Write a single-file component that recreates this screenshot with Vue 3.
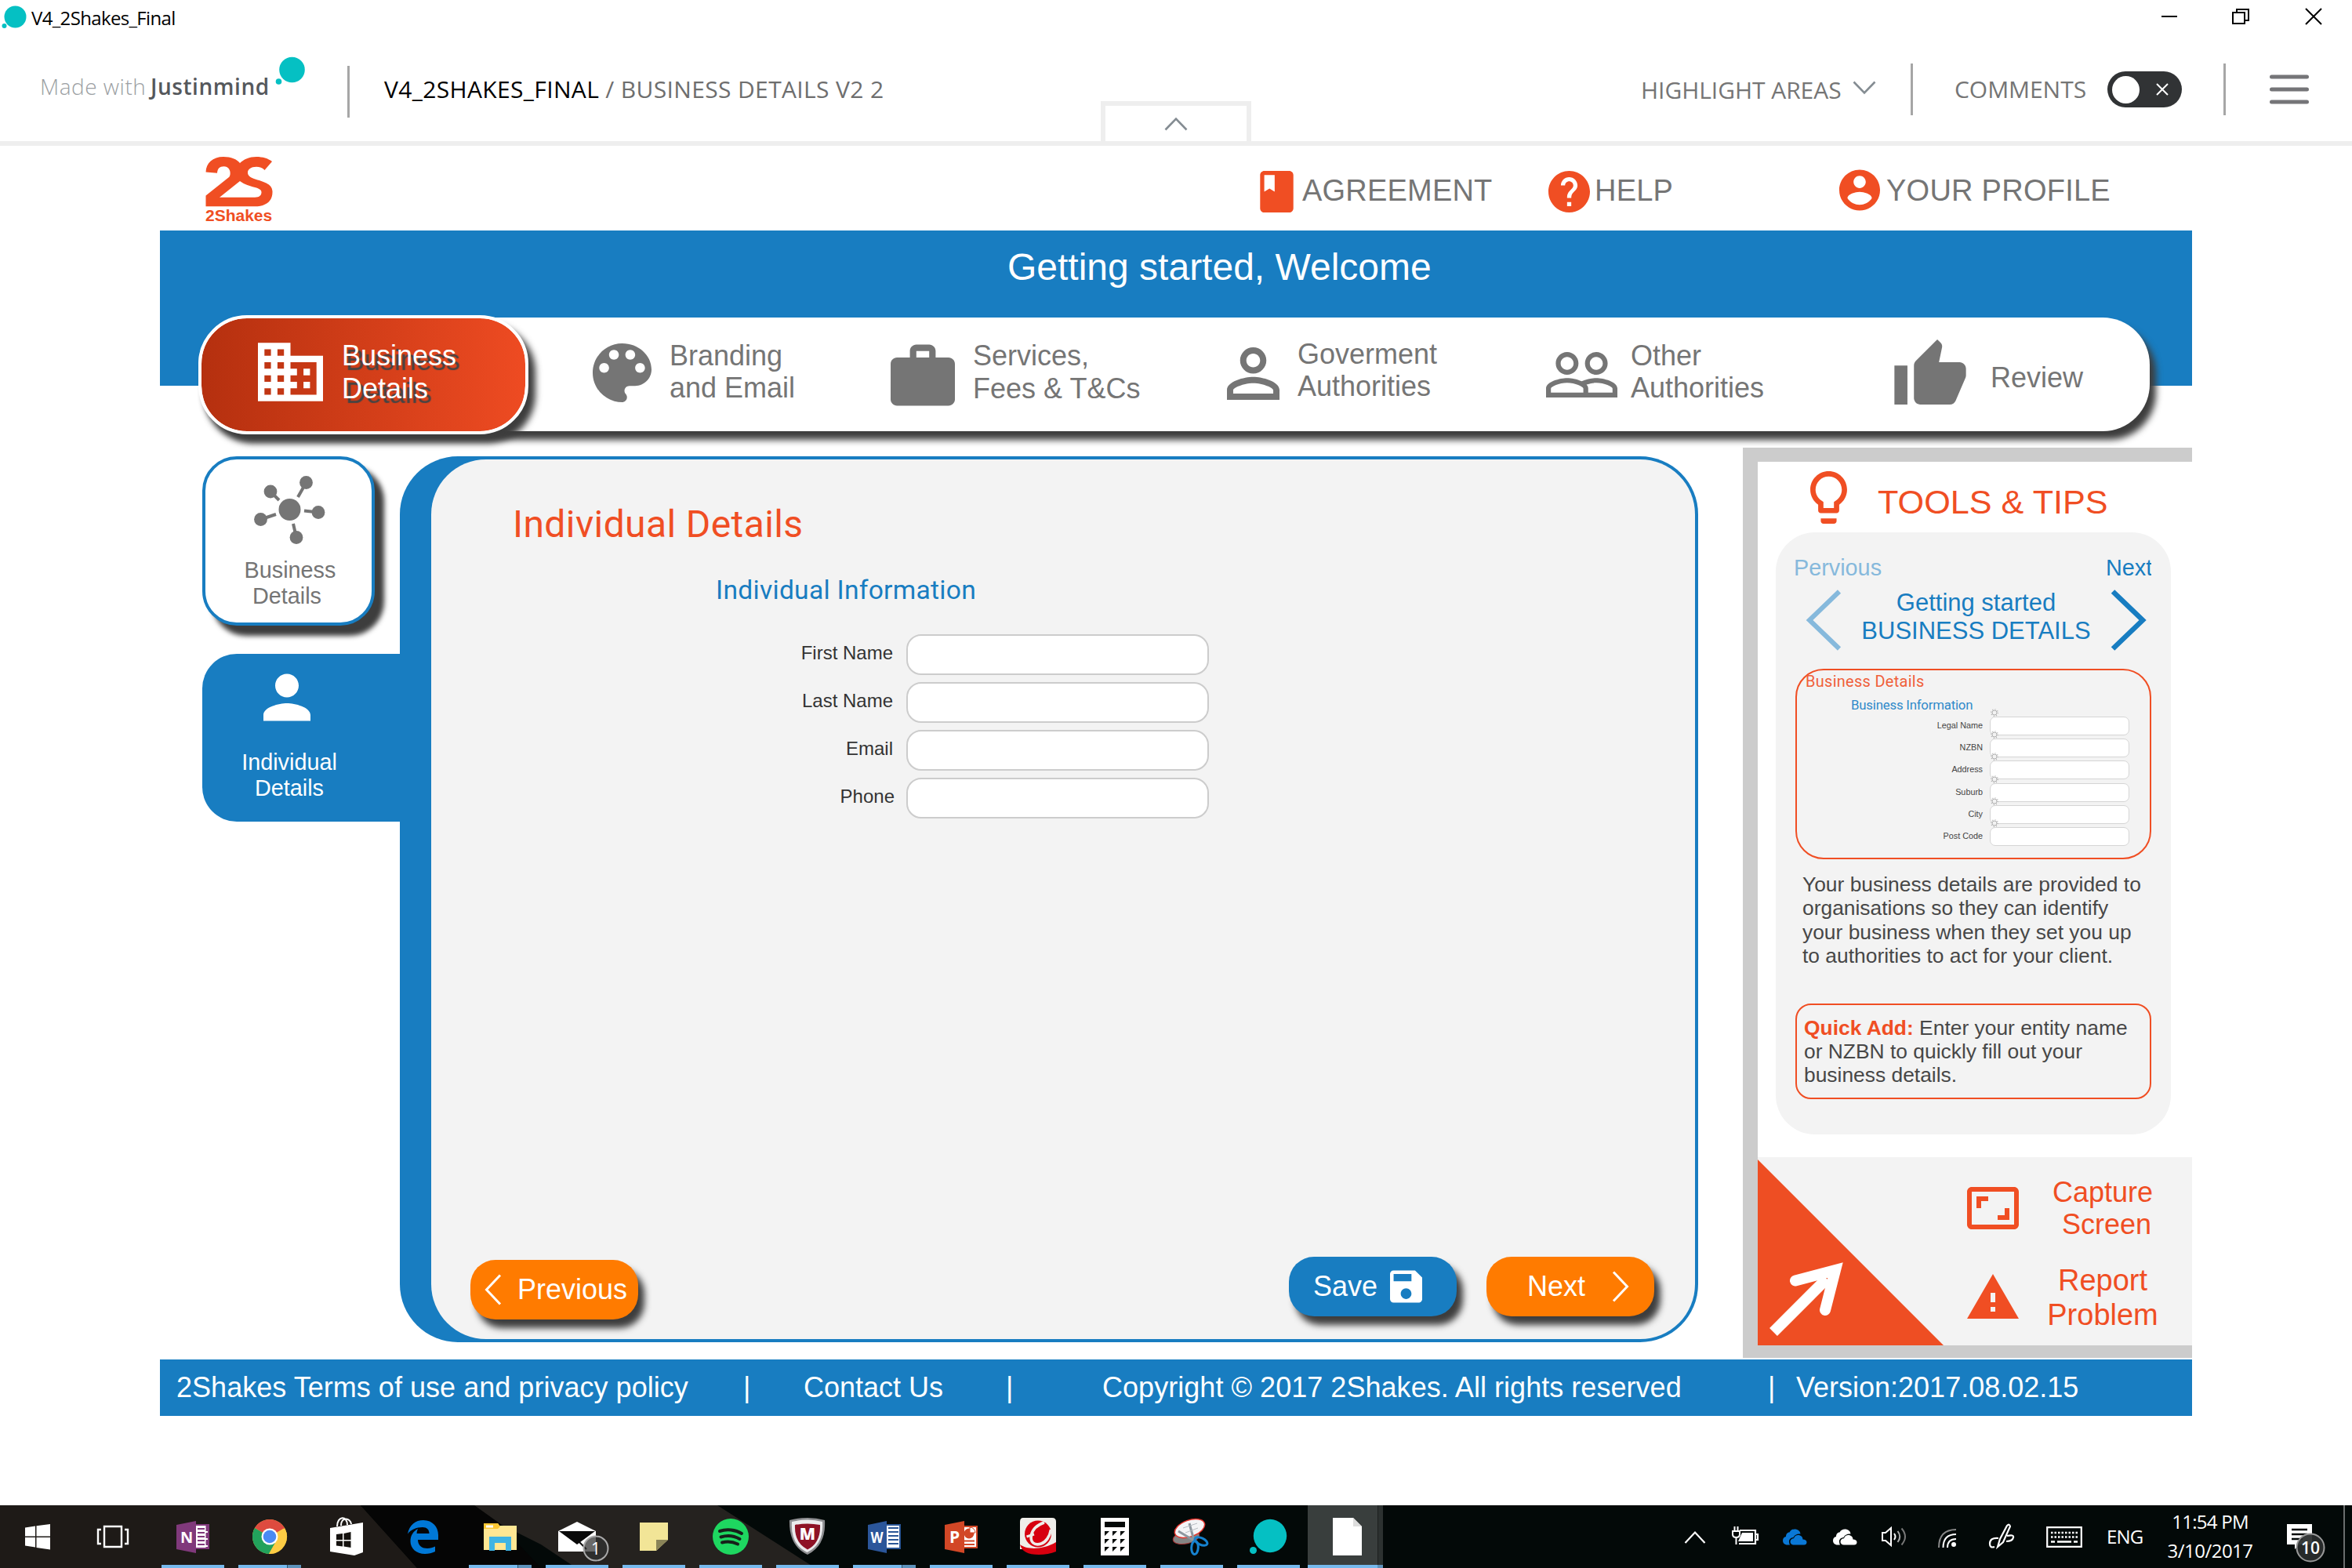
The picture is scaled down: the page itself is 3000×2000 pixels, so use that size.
<script setup>
const paths = {
  domain: 'M12 7V3H2v18h20V7H12zM6 19H4v-2h2v2zm0-4H4v-2h2v2zm0-4H4V9h2v2zm0-4H4V5h2v2zm4 12H8v-2h2v2zm0-4H8v-2h2v2zm0-4H8V9h2v2zm0-4H8V5h2v2zm10 12h-8v-2h2v-2h-2v-2h2v-2h-2V9h8v10zm-2-8h-2v2h2v-2zm0 4h-2v2h2v-2z',
  palette: 'M12 3c-4.97 0-9 4.03-9 9s4.03 9 9 9c.83 0 1.5-.67 1.5-1.5 0-.39-.15-.74-.39-1.01-.23-.26-.38-.61-.38-.99 0-.83.67-1.5 1.5-1.5H16c2.76 0 5-2.24 5-5 0-4.42-4.03-8-9-8zm-5.5 9c-.83 0-1.5-.67-1.5-1.5S5.67 9 6.5 9 8 9.67 8 10.5 7.33 12 6.5 12zm3-4C8.67 8 8 7.33 8 6.5S8.67 5 9.5 5s1.5.67 1.5 1.5S10.33 8 9.5 8zm5 0c-.83 0-1.5-.67-1.5-1.5S13.67 5 14.5 5s1.5.67 1.5 1.5S15.33 8 14.5 8zm3 4c-.83 0-1.5-.67-1.5-1.5S16.67 9 17.5 9s1.5.67 1.5 1.5-.67 1.5-1.5 1.5z',
  work: 'M20 6h-4V4c0-1.11-.89-2-2-2h-4c-1.11 0-2 .89-2 2v2H4c-1.11 0-1.99.89-1.99 2L2 19c0 1.11.89 2 2 2h16c1.11 0 2-.89 2-2V8c0-1.11-.89-2-2-2zm-6 0h-4V4h4v2z',
  personOutline: 'M12 5.9c1.16 0 2.1.94 2.1 2.1s-.94 2.1-2.1 2.1S9.9 9.16 9.9 8s.94-2.1 2.1-2.1m0 9c2.97 0 6.1 1.46 6.1 2.1v1.1H5.9V17c0-.64 3.13-2.1 6.1-2.1M12 4C9.79 4 8 5.79 8 8s1.79 4 4 4 4-1.79 4-4-1.79-4-4-4zm0 9c-2.67 0-8 1.34-8 4v3h16v-3c0-2.66-5.33-4-8-4z',
  peopleOutline: 'M16.5 13c-1.2 0-3.07.34-4.5 1-1.43-.67-3.3-1-4.5-1C5.33 13 1 14.08 1 16.25V19h22v-2.75c0-2.17-4.33-3.25-6.5-3.25zm-4 4.5h-10v-1.25c0-.54 2.56-1.75 5-1.75s5 1.21 5 1.75v1.25zm9 0H14v-1.25c0-.46-.2-.86-.52-1.22.88-.3 1.96-.53 3.02-.53 2.44 0 5 1.21 5 1.75v1.25zM7.5 12c1.93 0 3.5-1.57 3.5-3.5S9.43 5 7.5 5 4 6.57 4 8.5 5.57 12 7.5 12zm0-5.5c1.1 0 2 .9 2 2s-.9 2-2 2-2-.9-2-2 .9-2 2-2zm9 5.5c1.93 0 3.5-1.57 3.5-3.5S18.43 5 16.5 5 13 6.57 13 8.5s1.57 3.5 3.5 3.5zm0-5.5c1.1 0 2 .9 2 2s-.9 2-2 2-2-.9-2-2 .9-2 2-2z',
  thumb: 'M1 21h4V9H1v12zm22-11c0-1.1-.9-2-2-2h-6.31l.95-4.57.03-.32c0-.41-.17-.79-.44-1.06L14.17 1 7.59 7.59C7.22 7.95 7 8.45 7 9v10c0 1.1.9 2 2 2h9c.83 0 1.54-.5 1.84-1.22l3.02-7.05c.09-.23.14-.47.14-.73v-1.91l-.01-.01L23 10z',
  book: 'M18 2H6c-1.1 0-2 .9-2 2v16c0 1.1.9 2 2 2h12c1.1 0 2-.9 2-2V4c0-1.1-.9-2-2-2zM6 4h5v8l-2.5-1.5L6 12V4z',
  help: 'M12 2C6.48 2 2 6.48 2 12s4.48 10 10 10 10-4.48 10-10S17.52 2 12 2zm1 17h-2v-2h2v2zm2.07-7.75l-.9.92C13.45 12.9 13 13.5 13 15h-2v-.5c0-1.1.45-2.1 1.17-2.83l1.24-1.26c.37-.36.59-.86.59-1.41 0-1.1-.9-2-2-2s-2 .9-2 2H8c0-2.21 1.79-4 4-4s4 1.79 4 4c0 .88-.36 1.68-.93 2.25z',
  account: 'M12 2C6.48 2 2 6.48 2 12s4.48 10 10 10 10-4.48 10-10S17.52 2 12 2zm0 3c1.66 0 3 1.34 3 3s-1.34 3-3 3-3-1.34-3-3 1.34-3 3-3zm0 14.2c-2.5 0-4.71-1.28-6-3.22.03-1.99 4-3.08 6-3.08 1.99 0 5.97 1.09 6 3.08-1.29 1.94-3.5 3.22-6 3.22z',
  person: 'M12 12c2.21 0 4-1.79 4-4s-1.79-4-4-4-4 1.79-4 4 1.79 4 4 4zm0 2c-2.67 0-8 1.34-8 4v2h16v-2c0-2.66-5.33-4-8-4z',
  bulb: 'M9 21c0 .55.45 1 1 1h4c.55 0 1-.45 1-1v-1H9v1zm3-19C8.14 2 5 5.14 5 9c0 2.38 1.19 4.47 3 5.74V17c0 .55.45 1 1 1h6c.55 0 1-.45 1-1v-2.26c1.81-1.27 3-3.36 3-5.74 0-3.86-3.14-7-7-7zm2.85 11.1l-.85.6V16h-4v-2.3l-.85-.6C7.8 12.16 7 10.63 7 9c0-2.76 2.24-5 5-5s5 2.24 5 5c0 1.63-.8 3.16-2.15 4.1z',
  save: 'M17 3H5c-1.11 0-2 .9-2 2v14c0 1.1.89 2 2 2h14c1.1 0 2-.9 2-2V7l-4-4zm-5 16c-1.66 0-3-1.34-3-3s1.34-3 3-3 3 1.34 3 3-1.34 3-3 3zm3-10H5V5h10v4z',
  aspect: 'M19 12h-2v3h-3v2h5v-5zM7 9h3V7H5v5h2V9zm14-6H3c-1.1 0-2 .9-2 2v14c0 1.1.9 2 2 2h18c1.1 0 2-.9 2-2V5c0-1.1-.9-2-2-2zm0 16.01H3V4.99h18v14.02z',
  warning: 'M1 21h22L12 2 1 21zm12-3h-2v-2h2v2zm0-4h-2v-4h2v4z',
  cloud: 'M7 20.5C3 20.500 1 18 1 15c0-2.800 1.800-4.600 4-5C5 6 7.500 4.500 9.500 4.500 11 1.500 13.500.5 16 .5c4.500 0 7 2.500 7.500 6-4-.5-7.500 1-9 4.500-4 .5-6 3-5.500 6 .2 1.500.5 2.500 1 3.500zM15 20.500c-3 0-4.500-1.800-4.500-4 0-2.500 2-4.200 4.500-4.200 1-3 3-4.300 5.500-4.300 3.500 0 5.800 2.300 6 5.500 2.800 0 5 1.200 5 3.700 0 2-1.500 3.300-3.500 3.300z',
}
const nav = [
  { key: 'business', icon: 'domain', box: '2 3 20 18', lines: ['Business', 'Details'] },
  { key: 'branding', icon: 'palette', box: '3 3 18 18', lines: ['Branding', 'and Email'] },
  { key: 'services', icon: 'work', box: '2 2 20 19', lines: ['Services,', 'Fees & T&Cs'] },
  { key: 'goverment', icon: 'personOutline', box: '4 4 16 16', lines: ['Goverment', 'Authorities'] },
  { key: 'other', icon: 'peopleOutline', box: '1 5 22 14', lines: ['Other', 'Authorities'] },
  { key: 'review', icon: 'thumb', box: '1 1 22 20', lines: ['Review'] },
]
const fields = ['First Name', 'Last Name', 'Email', 'Phone']
const miniFields = ['Legal Name', 'NZBN', 'Address', 'Suburb', 'City', 'Post Code']
</script>

<template>
  <div class="screen">
    <header class="titlebar">
      <svg class="app-icon" width="36" height="40" viewBox="0 0 36 40"><circle cx="19.500" cy="21.500" r="14" fill="#05c0c3" /><circle cx="5.500" cy="33" r="3" fill="#05c0c3" /></svg>
      <span class="window-title">V4_2Shakes_Final</span>
      <div class="window-buttons">
        <svg width="92" height="44" viewBox="0 0 92 44"><path d="M36 21h20" stroke="#000" stroke-width="2" /></svg>
        <svg width="92" height="44" viewBox="0 0 92 44"><path d="M35 16h15v14H35zM40 16v-4h15v14h-5" fill="none" stroke="#000" stroke-width="2" /></svg>
        <svg width="92" height="44" viewBox="0 0 92 44"><path d="M36 11l20 20M56 11L36 31" stroke="#000" stroke-width="2" /></svg>
      </div>
    </header>

    <div class="toolbar">
      <div class="tb-left">
        <span class="made">Made with</span><span class="jim">Justinmind</span>
        <svg class="jim-dot" width="40" height="40" viewBox="0 0 40 40"><circle cx="21.500" cy="17" r="16.300" fill="#05c0c3" /><circle cx="4.500" cy="32" r="3.800" fill="#05c0c3" /></svg>
        <i class="divider"></i>
        <span class="crumb"><b>V4_2SHAKES_FINAL</b> / BUSINESS DETAILS V2 2</span>
      </div>
      <div class="tab"><svg width="30" height="18" viewBox="0 0 30 18"><path d="M1.500 16.500L15 2.500l13.500 14" fill="none" stroke="#848c92" stroke-width="2.600" /></svg></div>
      <div class="tb-right">
        <span class="highlight">HIGHLIGHT AREAS</span>
        <svg class="chev" width="30" height="18" viewBox="0 0 30 18"><path d="M1.500 1.500L15 15.500l13.500-14" fill="none" stroke="#848c92" stroke-width="2.600" /></svg>
        <i class="divider d2"></i>
        <span class="comments">COMMENTS</span>
        <span class="toggle"><i></i><svg width="16" height="16" viewBox="0 0 16 16"><path d="M1 1l14 14M15 1L1 15" stroke="#fff" stroke-width="2" /></svg></span>
        <i class="divider d3"></i>
        <svg class="burger" width="50" height="40" viewBox="0 0 50 40"><path d="M2.500 4h45M2.500 20h45M2.500 36h45" stroke="#757578" stroke-width="5" stroke-linecap="round" /></svg>
      </div>
    </div>

    <div class="stage">
      <div class="site-head">
        <div class="logo">
          <svg width="86" height="64" viewBox="0 0 86 64"><path fill="#f04e23" fill-rule="evenodd" d="M.5 19.500C1 8 9 0 23 0c10 0 17 3 21 8 5-5 12-8 21-8 8 0 15 2 20 6L75.500 17C73 14 69 12.700 65 12.700 58 12.700 54 16 54 20c0 4 3 6 8 8 12 4 23 6 23.500 16 .5 12-7.500 19.300-22.500 19.300H.5V49.500L30 26c3-3 2.500-13.700-6.500-13.700C18 12.300 15.500 15 15 20.700zM44 31L18 51.700h45c6 0 8.500-2.700 8.500-6.700C71.500 38 56 40 44 31z" /></svg>
          <span>2Shakes</span>
        </div>
        <svg class="ic-book" viewBox="4 2 16 20"><path :d="paths.book" /></svg><span class="t-agree">AGREEMENT</span>
        <svg class="ic-help" viewBox="2 2 20 20"><path :d="paths.help" /></svg><span class="t-help">HELP</span>
        <svg class="ic-acct" viewBox="2 2 20 20"><path :d="paths.account" /></svg><span class="t-acct">YOUR PROFILE</span>
      </div>

      <div class="banner">Getting started, Welcome</div>

      <nav class="steps">
        <a v-for="n in nav" :key="n.key" class="step" :class="n.key">
          <svg :viewBox="n.box"><path :d="paths[n.icon]" /></svg>
          <span><template v-for="(l, i) in n.lines" :key="l"><br v-if="i" />{{ l }}</template></span>
        </a>
      </nav>

      <main class="main">
        <div class="side">
          <div class="side-card">
            <svg width="92" height="88" viewBox="0 0 92 88">
              <g fill="#757575"><circle cx="45.500" cy="44" r="14" /><circle cx="21" cy="21" r="8.400" /><circle cx="66.500" cy="9.500" r="8.400" /><circle cx="8.500" cy="56.500" r="8.400" /><circle cx="82" cy="47.500" r="8.400" /><circle cx="54" cy="79.500" r="8.400" /></g>
              <path d="M21 21l11 11M66.500 9.500L56 28M8.500 56.500L28 50M82 47.500L64 45.500M54 79.500L50 62" stroke="#757575" stroke-width="4" />
            </svg>
            <span>Business<br />Details&nbsp;</span>
          </div>
          <div class="side-tab">
            <svg width="60" height="61" viewBox="4 4 16 16"><path :d="paths.person" fill="#fff" /></svg>
            <span>Individual<br />Details</span>
          </div>
        </div>

        <section class="panel">
          <div class="panel-in">
            <h1>Individual Details</h1>
            <h2>Individual Information</h2>
            <div class="form">
              <label v-for="f in fields" :key="f" class="row"><span>{{ f }}</span><i></i></label>
            </div>
            <div class="actions">
              <button class="prev"><svg width="22" height="40" viewBox="0 0 22 40"><path d="M20 1.500L2.500 20 20 38.500" /></svg>Previous</button>
              <button class="save">Save<svg width="41" height="42" viewBox="3 3 18 18"><path :d="paths.save" /></svg></button>
              <button class="next">Next<svg width="22" height="40" viewBox="0 0 22 40"><path d="M2 1.500L19.500 20 2 38.500" /></svg></button>
            </div>
          </div>
        </section>

        <aside class="tools">
          <div class="tools-head"><svg width="47" height="67" viewBox="5 2 14 20"><path :d="paths.bulb" fill="#f04e23" /></svg><span>TOOLS &amp; TIPS</span></div>
          <div class="tip">
            <div class="tip-nav"><span class="pv">Pervious</span><span class="nx">Next</span></div>
            <div class="tip-title">
              <svg width="46" height="78" viewBox="0 0 46 78"><path d="M43 2.500L5 39l38 36.500" stroke="#86b9dc" stroke-width="6" fill="none" /></svg>
              <span>Getting started<br />BUSINESS DETAILS</span>
              <svg width="46" height="78" viewBox="0 0 46 78"><path d="M3 2.500L41 39 3 75.500" stroke="#187dc1" stroke-width="6.500" fill="none" /></svg>
            </div>
            <div class="mini">
              <div class="mini-h">Business Details</div>
              <div class="mini-s">Business Information</div>
              <div class="mini-form">
                <div v-for="f in miniFields" :key="f" class="mini-row"><span>{{ f }}</span><i><svg width="10" height="10" viewBox="0 0 10 10"><circle cx="5" cy="5" r="3" fill="#f3f3f3" stroke="#b0b0b0" stroke-width="1" /><circle cx="5" cy="5" r="4.300" fill="none" stroke="#b0b0b0" stroke-width="1.200" stroke-dasharray="1.200 2.177" /></svg></i></div>
              </div>
            </div>
            <p>Your business details are provided to<br />organisations so they can identify<br />your business when they set you up<br />to authorities to act for your client.</p>
            <div class="quick"><b>Quick Add:</b> Enter your entity name<br />or NZBN to quickly fill out your<br />business details.</div>
          </div>
          <div class="tool-foot">
            <svg class="corner" width="238" height="240" viewBox="0 0 238 240"><path d="M0 3v237h237z" fill="#ee4e23" /><path d="M20 223L88 155" stroke="#fff" stroke-width="14" /><path d="M48 157.500L99 144l-13 51" stroke="#fff" stroke-width="14" fill="none" stroke-linecap="round" /></svg>
            <div class="tool-list">
              <div class="tool"><svg width="66" height="54" viewBox="1 3 22 18"><path :d="paths.aspect" /></svg><span>Capture<br />&nbsp;Screen</span></div>
              <div class="tool report"><svg width="66" height="57" viewBox="1 2 22 19"><path :d="paths.warning" /></svg><span>Report<br />Problem</span></div>
            </div>
          </div>
        </aside>
      </main>

      <footer class="foot">
        <span class="f1">2Shakes Terms of use and privacy policy</span><span class="b1">|</span><span class="f2">Contact Us</span><span class="b2">|</span><span class="f3">Copyright © 2017 2Shakes. All rights reserved</span><span class="b3">|</span><span class="f4">Version:2017.08.02.15</span>
      </footer>
    </div>

    <div class="taskbar">
      <svg class="wall" width="3000" height="80" viewBox="0 0 3000 80"><rect width="3000" height="80" fill="#030908" /><path d="M0 0h460l72 80H0z" fill="#1e1a17" /><path d="M460 0h155l75 80H532z" fill="#050505" /><path d="M605 0h310l125 80H735L690 50 640 25z" fill="#25221f" /></svg>
      <div class="slot start"><svg viewBox="0 0 48 48"><path fill="#fff" d="M8 12.500l13-2v13H8zM22.500 10.200L40 8v15.500H22.500zM8 25h13v12.500l-13-2zM22.500 25H40v15.500l-17.500-2.400z" /></svg></div>
      <div class="slot view"><svg viewBox="0 0 48 48"><path fill="none" stroke="#fff" stroke-width="2.400" d="M13 11h22v26H13zM9 15H5v18h4M39 15h4v18h-4" /></svg></div>
      <div class="slot run"><svg viewBox="0 0 48 48"><path d="M26 9h18v30H26z" fill="#fff" stroke="#80397b" stroke-width="2" /><path d="M30 14h9M30 19h9M30 24h9M30 29h9M30 34h9" stroke="#80397b" stroke-width="2" /><path d="M42 10v28" stroke="#80397b" stroke-width="3" stroke-dasharray="7 2" /><path d="M3 9l25-5v41L3 40z" fill="#80397b" /><text x="8" y="32" font-size="20" font-weight="700" fill="#fff">N</text></svg></div>
      <div class="slot run multi"><svg viewBox="0 0 48 48"><circle cx="24" cy="24" r="22" fill="#fcc934" /><path d="M24 24L4.900 13A22 22 0 0 1 43 13z" fill="#de4b3f" /><path d="M24 24L4.900 13A22 22 0 0 0 23 46l10-17z" fill="#22a25c" /><path d="M24 24L43 13A22 22 0 0 1 23 46l10-18z" fill="#fdcc44" /><path d="M24 13.500h19.300L40 10 24 9z" fill="#de4b3f" /><circle cx="24" cy="24" r="10.500" fill="#fff" /><circle cx="24" cy="24" r="8.300" fill="#4a8af4" /></svg></div>
      <div class="slot"><svg viewBox="0 0 48 48"><path d="M3 13l42-7v38l-11 4L3 43z" fill="#fff" /><path d="M12 11c0-14 13-14 13-2M17 10c0-12 12-10 13-2" fill="none" stroke="#fff" stroke-width="2" /><path d="M11 21l8-1v8h-8zM20.500 20l9-2v10h-9zM11 29.500h8v7l-8-1zM20.500 29.500h9v8.500l-9-1.500z" fill="#15120f" /></svg></div>
      <div class="slot"><svg viewBox="0 0 48 48"><path fill="#0078d7" d="M4 20.500C6 9 14 3 24 3c12 0 19 9 19 19v6H17c0 8 6 11 12 11 4 0 7-1 10-2.500V43c-4 2-8 3-13 3C15 46 7.500 39 7.500 30c0-8 4-13 9.500-16-1 2-1.500 4-1.500 6h16c0-5-3-8-8.500-8-8 0-15 3-19 8.500z" /></svg></div>
      <div class="slot run multi"><svg viewBox="0 0 48 48"><path d="M3 7h18l2 3h22v31H3z" fill="#ffe793" /><path d="M3 7h18l3 4-3 3H3z" fill="#fdc733" /><path d="M6 9.500h9v3H6z" fill="#fff" /><path d="M10 24h28v18h-7v-10H17v10h-7z" fill="#3fb4e4" /></svg></div>
      <div class="slot run"><svg viewBox="0 0 72 48"><path d="M12 17L36 5l24 12v26H12z" fill="#fff" /><path d="M13 17h46L36 34z" fill="#0a0a0a" /><path d="M36 28l12 12" stroke="#0a0a0a" stroke-width="2" /><circle cx="60" cy="39" r="15.500" fill="#333b" stroke="#aaa" stroke-width="2" /><text x="60" y="47" font-size="21" text-anchor="middle" fill="#fff">1</text></svg></div>
      <div class="slot run"><svg viewBox="0 0 48 48"><path d="M6 6h36v22L27 42H6z" fill="#f2e597" /><path d="M27 28h15L27 42z" fill="#8a8458" /></svg></div>
      <div class="slot run"><svg viewBox="0 0 48 48"><circle cx="24" cy="24" r="23" fill="#1ed760" /><path d="M10 17c9-3 20-2 28 3M11.500 24.500c8-2.500 17-1.500 24 2.500M13 31.500c7-2 14-1 20 2" stroke="#17201a" stroke-width="4" fill="none" stroke-linecap="round" /></svg></div>
      <div class="slot run"><svg viewBox="0 0 48 48"><path d="M1 3q11-3 23-3 11 0 22 3 2 32-22 44Q0 36 1 3z" fill="#8f8f92" /><path d="M4 5q10-2.500 20-2.500T43 5q2 29-19.500 39Q2 34 4 5z" fill="#ececee" /><path d="M8 9q8-1.500 16-1.500T40 9q1 23-16 31.500Q7 32 8 9z" fill="#8e1226" /><text x="24" y="28" font-size="21" font-weight="800" text-anchor="middle" fill="#fff">M</text></svg></div>
      <div class="slot run multi"><svg viewBox="0 0 48 48"><path d="M26 9h18v30H26z" fill="#fff" stroke="#2b5797" stroke-width="2" /><path d="M29 13h13M29 18h13M29 23h13M29 28h13M29 33h13" stroke="#2b5797" stroke-width="2" /><path d="M3 9l24-5v41L3 40z" fill="#2b569a" /><text x="6.500" y="32" font-size="19" font-weight="700" textLength="16" lengthAdjust="spacingAndGlyphs" fill="#fff">W</text></svg></div>
      <div class="slot run"><svg viewBox="0 0 48 48"><path d="M26 11h18v27H26z" fill="#fff" stroke="#d24726" stroke-width="2" /><circle cx="34" cy="20" r="6.500" fill="#d24726" /><path d="M35 19v-7a7 7 0 0 1 7 7z" fill="#fff" stroke="#d24726" stroke-width="1" /><path d="M28 29.500h13M28 34h13" stroke="#d24726" stroke-width="2" /><path d="M3 9l25-5v41L3 40z" fill="#d24726" /><text x="9" y="32" font-size="21" font-weight="700" fill="#fff">P</text></svg></div>
      <div class="slot run"><svg viewBox="0 0 48 48"><path d="M5 0h37q5 0 5 5v35H1V5q0-5 4-5z" fill="#efeeea" /><path d="M1 34c9 7 29 7 46-3v12q-10 4-22 4Q4 47 1 34z" fill="#d7000f" /><circle cx="24" cy="20.500" r="17" fill="#d7000f" /><path d="M32 6C23 9 17 15 15.500 22c-2 9 4 14 12.500 11 6-2 11-9 12.500-18" fill="none" stroke="#efeeea" stroke-width="3.600" /><path d="M9.500 24l9.500-3" stroke="#efeeea" stroke-width="3" /></svg></div>
      <div class="slot run"><svg viewBox="0 0 48 48"><path d="M6 0h36v48H6z" fill="#fff" /><path d="M11 5h26v7H11zM11 17h6l-6 6zM21 17h6l-6 6zM31 17h6l-6 6zM11 27h6l-6 6zM21 27h6l-6 6zM31 27h6l-6 6zM11 37h6l-6 6zM21 37h6l-6 6zM31 37h6l-6 6z" fill="#030908" /></svg></div>
      <div class="slot run"><svg viewBox="0 0 48 48"><ellipse cx="17" cy="25" rx="17" ry="8" transform="rotate(-12 17 25)" fill="#858585" stroke="#a33" stroke-width="1" /><ellipse cx="21.500" cy="13.500" rx="20" ry="10.500" transform="rotate(-20 21.500 13.500)" fill="#f4f4f6" stroke="#e5352d" stroke-width="1.500" /><path d="M21 7l6 22M7 17l20 12" stroke="#8e979f" stroke-width="3" /><path d="M13 13l18-6M16 19l16-6" stroke="#b7bcc2" stroke-width="1" /><ellipse cx="36" cy="30" rx="8.500" ry="4.300" transform="rotate(25 36 30)" fill="none" stroke="#1682cf" stroke-width="3" /><ellipse cx="28" cy="38" rx="4.300" ry="8.500" transform="rotate(3 28 38)" fill="none" stroke="#1682cf" stroke-width="3" /></svg></div>
      <div class="slot run"><svg viewBox="0 0 48 48"><circle cx="26" cy="23" r="21.200" fill="#05c0c3" /><circle cx="4.500" cy="41.500" r="4.500" fill="#05c0c3" /></svg></div>
      <div class="slot run multi active"><svg viewBox="0 0 48 48"><path d="M6 0h26l11 11v37H6z" fill="#fff" /><path d="M32 0v11h11z" fill="#ddd" /></svg></div>

      <div class="tray">
        <svg class="y-chev" width="28" height="18" viewBox="0 0 28 18"><path d="M1.500 16L14 2.500 26.500 16" fill="none" stroke="#fff" stroke-width="2.200" /></svg>
        <svg class="y-bat" width="34" height="24" viewBox="0 0 34 24"><path d="M10 5h20v17H9M31 10h2v7h-2" fill="none" stroke="#fff" stroke-width="2.200" /><path d="M13 8h14v11H8z" fill="#fff" /><path d="M1 6h9v4q0 4-4.500 4T1 10zM3.500 6V0M7.500 6V0M5.500 14v9" fill="#030908" stroke="#fff" stroke-width="2" /></svg>
        <svg class="y-c1" width="33" height="21" viewBox="0 0 33 21"><path :d="paths.cloud" fill="#0a78d6" /></svg>
        <svg class="y-c2" width="33" height="21" viewBox="0 0 33 21"><path :d="paths.cloud" fill="#fff" /></svg>
        <svg class="y-spk" width="34" height="26" viewBox="0 0 34 26"><path d="M1 8h4l7-6v22l-7-6H1z" fill="none" stroke="#fff" stroke-width="2" /><path d="M16 9q3 4 0 8" fill="none" stroke="#fff" stroke-width="2" /><path d="M20.500 6q5.500 7 0 14" fill="none" stroke="#aaa" stroke-width="2" /><path d="M25.500 2.500q9 10.500 0 21" fill="none" stroke="#777" stroke-width="2" /></svg>
        <svg class="y-wifi" width="25" height="26" viewBox="0 0 25 26"><circle cx="21" cy="21" r="3" fill="#fff" /><path d="M13 25q0-11 11-11M7.500 25Q7.500 8 24 8" fill="none" stroke="#fff" stroke-width="2" /><path d="M2 25Q2 2 24 2" fill="none" stroke="#888" stroke-width="2" /></svg>
        <svg class="y-pen" width="34" height="34" viewBox="0 0 34 34"><path d="M12 30l3-10L24 3q3-3 4 1l-9 20zM13 19Q2 18 2 26q0 6 6 4M24 16q9-2 8 2-1 5-9 5" fill="none" stroke="#fff" stroke-width="2.200" /></svg>
        <svg class="y-kbd" width="46" height="27" viewBox="0 0 46 27"><path d="M1.200 1.200h43.600v24.600H1.200z" fill="none" stroke="#fff" stroke-width="2.200" /><path d="M6 8h35M6 13.500h35" stroke="#fff" stroke-width="2.500" stroke-dasharray="2.500 2" /><path d="M6 19.500h5M14 19.500h18M35 19.500h5" stroke="#fff" stroke-width="2.500" /></svg>
        <span class="eng">ENG</span>
        <span class="clock"><em class="time">11:54 PM</em><br /><em class="date">3/10/2017</em></span>
        <svg class="y-note" width="52" height="52" viewBox="0 0 52 52"><path d="M1 2h32v26H17l-6 6v-6H1z" fill="#fff" /><path d="M7 9h20M7 15h20M7 21h14" stroke="#030908" stroke-width="2.400" /><circle cx="31" cy="32" r="17.500" fill="#2a2d2dee" stroke="#999" stroke-width="2" /><text x="31" y="40" font-size="21" font-weight="600" text-anchor="middle" fill="#fff">10</text></svg>
        <i class="peek"></i>
      </div>
    </div>
  </div>
</template>

<style>
body { margin: 0; background: #fff; }
</style>

<style scoped>
.screen { width: 3000px; height: 2000px; overflow: hidden; background: #fff; font-family: "Liberation Sans", Arial, sans-serif; color: #757575; white-space: nowrap; }
.screen * { box-sizing: border-box; }
svg { display: block; flex: none; overflow: visible; }
span { flex: none; }
i { font-style: normal; display: block; flex: none; }

.titlebar { display: flex; height: 46px; font-family: "Open Sans", "Noto Sans", sans-serif; color: #000; }
.window-title { margin-left: 4px; font-size: 24px; line-height: 46px; letter-spacing: -0.65px; }
.window-buttons { display: flex; margin-left: auto; margin-right: 3px; }

.toolbar { display: grid; grid-template-columns: 1fr 192px 1fr; height: 140px; border-bottom: 6px solid #eee; font-family: "Open Sans", "Noto Sans", sans-serif; }
.tb-left, .tb-right { display: flex; align-items: flex-start; }
.made { margin: 44px 0 0 51px; width: 141px; font-size: 28px; line-height: 40px; color: #9c9fa3; font-weight: 300; letter-spacing: 0.5px; }
.jim { margin-top: 44px; width: 159px; font-size: 28px; line-height: 40px; color: #55585c; font-weight: 600; letter-spacing: 0.55px; }
.jim-dot { margin-top: 26px; }
.divider { width: 3px; height: 66px; background: #a6a6a6; margin: 38px 0 0 52px; }
.crumb { margin: 48px 0 0 44px; font-size: 30px; font-weight: 500; line-height: 40px; color: #6e6e6e; letter-spacing: 0.35px; }
.crumb b { font-weight: 500; color: #000; }
.tab { align-self: end; height: 51px; border: 6px solid #eee; border-bottom: 0; display: flex; justify-content: center; padding-top: 14px; }
.highlight { margin: 49px 0 0 497px; width: 271px; font-size: 30px; line-height: 40px; letter-spacing: -0.05px; font-weight: 400; color: #757575; }
.chev { margin-top: 57px; margin-left: -1px; }
.divider.d2 { margin: 35px 0 0 44px; }
.comments { margin: 48px 0 0 53px; width: 195px; font-size: 30px; line-height: 40px; letter-spacing: -0.05px; color: #757575; }
.toggle { display: flex; align-items: center; justify-content: space-between; width: 95px; height: 46px; margin-top: 45px; padding: 0 17px 0 6px; border-radius: 23px; background: #313335; }
.toggle i { width: 35px; height: 35px; border-radius: 50%; background: #fff; }
.divider.d3 { margin: 35px 0 0 53px; }
.burger { margin: 48px 0 0 56px; }

.stage { width: 2592px; margin: 0 204px; }
.site-head { display: flex; align-items: flex-start; height: 108px; font-size: 38px; line-height: 44px; }
.site-head > span { margin-top: 35px; }
.site-head > svg { fill: #f04e23; }
.logo { margin: 14px 0 0 58px; width: 86px; }
.logo span { display: block; margin-top: 0; color: #f04e23; font-weight: 700; font-size: 21px; line-height: 22px; }
.ic-book { width: 43px; height: 53px; margin: 32px 0 0 1259px; }
.ic-help { width: 53px; height: 53px; margin-top: 32px; }
.ic-acct { width: 52px; height: 53px; margin-top: 30px; }
.t-agree { margin-left: 11px; width: 314px; letter-spacing: 0.2px; }
.t-help { margin-left: 6px; width: 312px; letter-spacing: 0.2px; }
.t-acct { margin-left: 8px; letter-spacing: 0.25px; }

.banner { height: 198px; background: #187dc1; color: #fff; font-size: 48px; line-height: 60px; padding: 17px 0 0 1081px; }

.steps { display: flex; align-items: flex-start; position: relative; height: 145px; margin: -87px 54px 0 49px; border-radius: 60px; background: #fff; box-shadow: 8px 11px 8px #3d3d3d; }
.step { display: flex; align-items: flex-start; font-size: 36px; line-height: 41px; }
.step svg { fill: #757575; }
.step.business { width: 421px; height: 152px; margin-top: -3px; padding-left: 72px; border: 4px solid #fff; border-radius: 62px; background: linear-gradient(90deg, #b5300f, #ee4b22) padding-box, #fff; box-shadow: 9px 11px 8px #3d3d3d; color: #fff; text-shadow: 5px 6px 1px #444; line-height: 42px; }
.business svg { width: 83px; height: 75px; margin-top: 31px; fill: #fff; }
.business span { margin: 27px 0 0 24px; }
.branding { margin-left: 82px; }
.branding svg { width: 75px; height: 75px; margin-top: 33px; }
.branding span { margin: 28px 0 0 23px; width: 182px; }
.services { margin-left: 100px; }
.services svg { width: 82px; height: 79px; margin-top: 34px; }
.services span { margin: 28px 0 0 23px; width: 238px; line-height: 42px; }
.goverment { margin-left: 86px; }
.goverment svg { width: 67px; height: 67px; margin-top: 38px; }
.goverment span { margin: 26px 0 0 23px; width: 198px; }
.other { margin-left: 119px; }
.other svg { width: 91px; height: 58px; margin-top: 44px; }
.other span { margin: 28px 0 0 17px; width: 189px; }
.review { margin-left: 147px; }
.review svg { width: 92px; height: 83px; margin-top: 28px; }
.review span { margin: 56px 0 0 31px; }

.main { display: flex; align-items: flex-start; height: 1152px; margin-top: 32px; }
.side { width: 252px; margin-left: 54px; font-size: 28.800px; line-height: 33px; text-align: center; }
.side-card { display: flex; flex-direction: column; align-items: center; width: 220px; height: 216px; border: 4px solid #187dc1; border-radius: 44px; background: #fff; box-shadow: 12px 13px 6px #3d3d3d; padding: 20px 0 0 4px; }
.side-card span { margin-top: 17px; }
.side-tab { display: flex; flex-direction: column; align-items: center; height: 214px; margin-top: 36px; padding: 25px 30px 0 0; background: #187dc1; color: #fff; border-radius: 44px 0 0 44px; }
.side-tab svg { margin-right: 6px; }
.side-tab span { margin-top: 36px; }

.panel { width: 1656px; height: 1130px; padding: 4px 4px 4px 40px; border-radius: 74px; background: #187dc1; }
.panel-in { display: flex; flex-direction: column; height: 1122px; border-radius: 70px; background: #f3f3f3; }
h1, h2 { margin: 0; font-family: Roboto, sans-serif; font-weight: 400; }
h1 { margin: 55px 0 0 104px; font-size: 48px; line-height: 56px; color: #f04e23; letter-spacing: 0.4px; }
h2 { margin: 36px 0 0 363px; font-size: 33.600px; line-height: 40px; color: #187dc1; letter-spacing: 0.28px; }
.form { display: flex; flex-direction: column; gap: 9px; margin-top: 36px; }
.row { display: flex; height: 52px; font-size: 24px; line-height: 47px; color: #333; }
.row span { width: 589px; text-align: right; }
.row:last-child span { width: 591px; }
.row:last-child i { margin-left: 15px; }
.row i { width: 386px; margin-left: 17px; border: 2px solid #ccc; border-radius: 19px; background: #fff; }
.actions { display: flex; align-items: flex-start; height: 105px; margin-top: auto; }
button { display: flex; align-items: center; flex: none; width: 214px; height: 76px; margin: 0; padding: 0; border: 0; border-radius: 32px; background: #ff7b00; color: #fff; font: 36px/74px "Liberation Sans", Arial, sans-serif; box-shadow: 8px 11px 8px #3d3d3d; }
button svg { fill: none; stroke: #fff; stroke-width: 3px; }
.prev { margin: 4px 0 0 50px; padding-left: 18px; }
.prev svg { margin-right: 20px; }
.save { margin-left: 830px; padding-left: 31px; background: #187dc1; }
.save svg { margin-left: 16px; fill: #fff; stroke: none; }
.next { margin-left: 38px; padding-left: 52px; }
.next svg { margin-left: 34px; }

.tools { width: 573px; height: 1161px; margin: -11px 0 0 57px; border: solid #ccc; border-width: 18px 0 16px 19px; background: #fff; }
.tools-head { display: flex; align-items: flex-start; height: 90px; padding: 12px 0 0 67px; color: #f04e23; font-size: 43.200px; line-height: 50px; }
.tools-head span { margin: 14px 0 0 39px; }
.tip { width: 504px; height: 768px; margin-left: 23px; border-radius: 50px; background: #f3f3f3; overflow: hidden; }
.tip-nav { display: flex; justify-content: space-between; padding: 28px 25px 0 23px; font-size: 28.800px; line-height: 34px; color: #187dc1; }
.pv { color: #86b9dc; }
.nx { width: 58px; overflow: hidden; }
.tip-title { display: flex; align-items: flex-start; height: 112px; padding: 0 31px 0 38px; justify-content: space-between; font-size: 31px; line-height: 36px; color: #187dc1; text-align: center; }
.tip-title svg { margin-top: 11px; }
.tip-title span { margin-top: 10px; }
.mini { width: 454px; height: 243px; margin-left: 25px; border: 2px solid #f04e23; border-radius: 36px; font-family: Roboto, sans-serif; }
.mini-h { margin: 2px 0 0 11px; font-size: 20px; line-height: 24px; color: #f0603a; letter-spacing: 0.28px; }
.mini-s { margin: 8px 0 0 69px; font-size: 16.800px; line-height: 20px; color: #2f8aca; letter-spacing: -0.2px; }
.mini-form { display: flex; flex-direction: column; gap: 4.200px; margin-top: 5px; }
.mini-row { display: flex; height: 24px; font: 10.800px/23px "Liberation Sans", Arial, sans-serif; color: #444; }
.mini-row span { width: 237px; text-align: right; }
.mini-row i { position: relative; width: 178px; margin-left: 9px; border: 1px solid #d5d5d5; border-radius: 7px; background: #fff; }
.mini-row svg { position: absolute; left: 0; top: -11px; }
p { margin: 17px 0 0 34px; font-size: 26.400px; line-height: 30.300px; color: #474747; }
.quick { width: 454px; height: 122px; margin: 46px 0 0 25px; padding: 14px 0 0 9px; border: 2px solid #f04e23; border-radius: 20px; font-size: 26.400px; line-height: 30px; color: #474747; }
.quick b { color: #f04e23; }
.tool-foot { display: flex; height: 240px; margin-top: 29px; background: #f3f3f3; }
.tool-list { margin-left: 29px; padding-top: 24px; }
.tool { display: flex; align-items: flex-start; height: 82px; font-size: 36px; line-height: 41px; color: #f04e23; }
.tool svg { fill: #f04e23; margin-top: 14px; }
.tool span { width: 180px; margin-left: 17px; text-align: center; }
.tool.report { margin-top: 29px; font-size: 38px; line-height: 44px; }

.foot { display: flex; height: 72px; background: #187dc1; color: #fff; font-size: 36px; line-height: 72px; }
.f1 { margin-left: 21px; width: 660px; letter-spacing: 0.03px; }
.b1 { margin-left: 63px; width: 9px; }
.f2 { margin-left: 68px; width: 185px; }
.b2 { margin-left: 73px; width: 9px; }
.f3 { margin-left: 114px; width: 745px; letter-spacing: 0.04px; }
.b3 { margin-left: 104px; width: 9px; }
.f4 { margin-left: 27px; }

.taskbar { position: relative; display: flex; height: 80px; margin-top: 114px; color: #fff; font-family: "Open Sans", "Noto Sans", sans-serif; }
.wall { position: absolute; left: 0; top: 0; }
.slot { position: relative; display: flex; flex-direction: column; align-items: center; justify-content: center; width: 98px; height: 80px; flex: none; }
.slot svg { height: 48px; width: auto; }
.slot.start { width: 96px; }
.slot.view { width: 101px; padding-right: 5px; }
.slot.run::after { content: ""; position: absolute; left: 9px; bottom: 0; width: 80px; height: 4px; background: #76b9ed; }
.slot.run.multi::after { background: linear-gradient(90deg, #76b9ed 62px, #34536b 62px, #34536b 63px, #5d92bb 63px); }
.slot.active { width: 96px; margin-left: 1px; background: linear-gradient(90deg, #393e3d 89px, #1d2120 89px, #1d2120 90px, #2c3130 90px); padding-left: 4px; }
.slot.run.active::after { left: 0; width: 96px; background: linear-gradient(90deg, #76b9ed 89px, #5d92bb 89px); }
.tray { position: relative; display: flex; align-items: flex-start; margin-left: 384px; }
.y-chev { margin-top: 32px; }
.y-bat { margin: 27px 0 0 33px; }
.y-c1 { margin: 30px 0 0 30px; }
.y-c2 { margin: 30px 0 0 31px; }
.y-spk { margin: 27px 0 0 30px; }
.y-wifi { margin: 29px 0 0 37px; }
.y-pen { margin: 23px 0 0 40px; }
.y-kbd { margin: 27px 0 0 40px; }
.eng { width: 64px; margin: 21px 0 0 31px; font-size: 24px; line-height: 38px; letter-spacing: -0.8px; }
.clock { width: 140px; text-align: center; font-size: 24px; line-height: 37px; margin: 2px 0 0 -2px; }
.clock em { font-style: normal; }
.time { letter-spacing: -0.75px; }
.date { letter-spacing: -0.5px; }
.y-note { margin: 22px 0 0 27px; }
.peek { width: 2px; height: 80px; margin-left: 21px; background: #6a6d6d; }
</style>
